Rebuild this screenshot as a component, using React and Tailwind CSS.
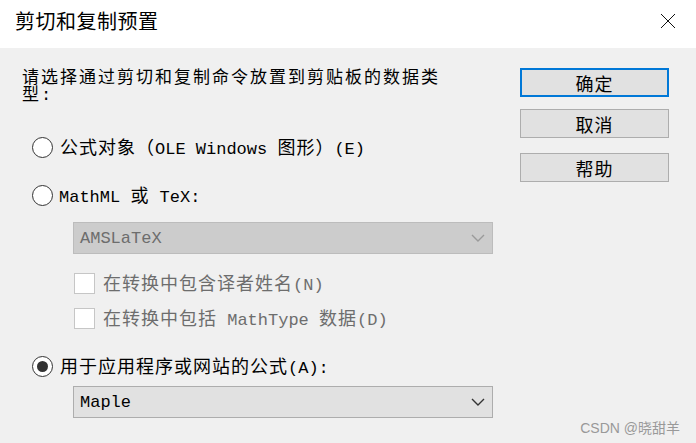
import React from "react";

const CJK_RE = /([\u3000-\u9fff\uff00-\uffef]+)/;

function Mix({ text, small }) {
  const parts = text.split(CJK_RE).filter((p) => p !== "");
  return (
    <>
      {parts.map((p, i) =>
        CJK_RE.test(p) ? (
          <span
            key={i}
            className={
              small
                ? "font-['Noto_Sans_CJK_SC',sans-serif] text-[17px] tracking-[2px]"
                : "font-['Noto_Sans_CJK_SC',sans-serif] text-[18px] tracking-[1px]"
            }
          >
            {p}
          </span>
        ) : (
          <span key={i} className="font-['Liberation_Mono',monospace] text-[17px] whitespace-pre">
            {p}
          </span>
        )
      )}
    </>
  );
}

function Radio({ checked }) {
  return (
    <span className="w-[21px] h-[21px] shrink-0 rounded-full border-[1.5px] border-[#333] bg-white flex items-center justify-center">
      {checked && <span className="w-[11px] h-[11px] rounded-full bg-[#333]" />}
    </span>
  );
}

function Check() {
  return <span className="w-[21px] h-[21px] shrink-0 bg-white border border-[#c6c6c6]" />;
}

function Chevron({ color }) {
  return (
    <svg width="14" height="8" viewBox="0 0 14 8" className="shrink-0">
      <polyline points="1,1 7,7 13,1" fill="none" stroke={color} strokeWidth="1.4" />
    </svg>
  );
}

function Button({ label, primary }) {
  return (
    <div
      className={
        "h-[29px] w-[149px] bg-[#e1e1e1] flex items-center justify-center text-black leading-none " +
        (primary ? "border-2 border-[#0078d7]" : "border border-[#adadad]")
      }
    >
      <span className="font-['Noto_Sans_CJK_SC',sans-serif] text-[18px] tracking-[1px]">{label}</span>
    </div>
  );
}

export default function App() {
  return (
    <div className="w-[696px] h-[443px] flex flex-col bg-[#f0f0f0] overflow-hidden text-black">
      {/* Title bar */}
      <div className="h-[48px] bg-white flex items-center justify-between pl-[15px] pr-[20px] pb-[6px] shrink-0">
        <span className="font-['Noto_Sans_CJK_SC',sans-serif] text-[20px] tracking-[0.5px] text-black">
          剪切和复制预置
        </span>
        <svg width="16" height="16" viewBox="0 0 16 16">
          <path d="M1 1 L15 15 M15 1 L1 15" stroke="#111" strokeWidth="1" fill="none" />
        </svg>
      </div>

      {/* Body */}
      <div className="flex-1 flex relative">
        <div className="flex-1 flex flex-col pl-[22px] pt-[19px]">
          <div className="h-[17px] flex items-center leading-none">
            <span>
              <Mix small text="请选择通过剪切和复制命令放置到剪贴板的数据类" />
            </span>
          </div>
          <div className="mt-[1px] h-[17px] flex items-center leading-none">
            <span>
              <Mix small text="型:" />
            </span>
          </div>

          <div className="mt-[33px] ml-[10px] h-[24px] flex items-center gap-[7px] leading-none">
            <Radio />
            <span>
              <Mix text="公式对象（OLE Windows 图形）(E)" />
            </span>
          </div>

          <div className="mt-[24px] ml-[10px] h-[24px] flex items-center gap-[6px] leading-none">
            <Radio />
            <span>
              <Mix text="MathML 或 TeX:" />
            </span>
          </div>

          <div className="mt-[15px] ml-[51px] w-[420px] h-[32px] bg-[#cccccc] border border-[#bcbcbc] flex items-center justify-between pl-[6px] pr-[7px] text-[#6d6d6d] leading-none">
            <span>
              <Mix text="AMSLaTeX" />
            </span>
            <Chevron color="#9a9a9a" />
          </div>

          <div className="mt-[18px] ml-[52px] h-[22px] flex items-center gap-[8px] text-[#6d6d6d] leading-none">
            <Check />
            <span>
              <Mix text="在转换中包含译者姓名(N)" />
            </span>
          </div>

          <div className="mt-[13px] ml-[52px] h-[22px] flex items-center gap-[8px] text-[#6d6d6d] leading-none">
            <Check />
            <span>
              <Mix text="在转换中包括 MathType 数据(D)" />
            </span>
          </div>

          <div className="mt-[25px] ml-[10px] h-[24px] flex items-center gap-[7px] leading-none">
            <Radio checked />
            <span>
              <Mix text="用于应用程序或网站的公式(A):" />
            </span>
          </div>

          <div className="mt-[8px] ml-[51px] w-[420px] h-[32px] bg-[#e1e1e1] border border-[#adadad] flex items-center justify-between pl-[6px] pr-[7px] text-black leading-none">
            <span>
              <Mix text="Maple" />
            </span>
            <Chevron color="#333" />
          </div>
        </div>

        <div className="w-[149px] mr-[27px] pt-[20px] flex flex-col shrink-0">
          <Button label="确定" primary />
          <div className="mt-[12px]">
            <Button label="取消" />
          </div>
          <div className="mt-[15px]">
            <Button label="帮助" />
          </div>
        </div>

        <span className="absolute right-[16px] bottom-[8px] text-[14px] text-[#999] font-['Liberation_Sans','Noto_Sans_CJK_SC',sans-serif] leading-none">
          CSDN @晓甜羊
        </span>
      </div>
    </div>
  );
}
